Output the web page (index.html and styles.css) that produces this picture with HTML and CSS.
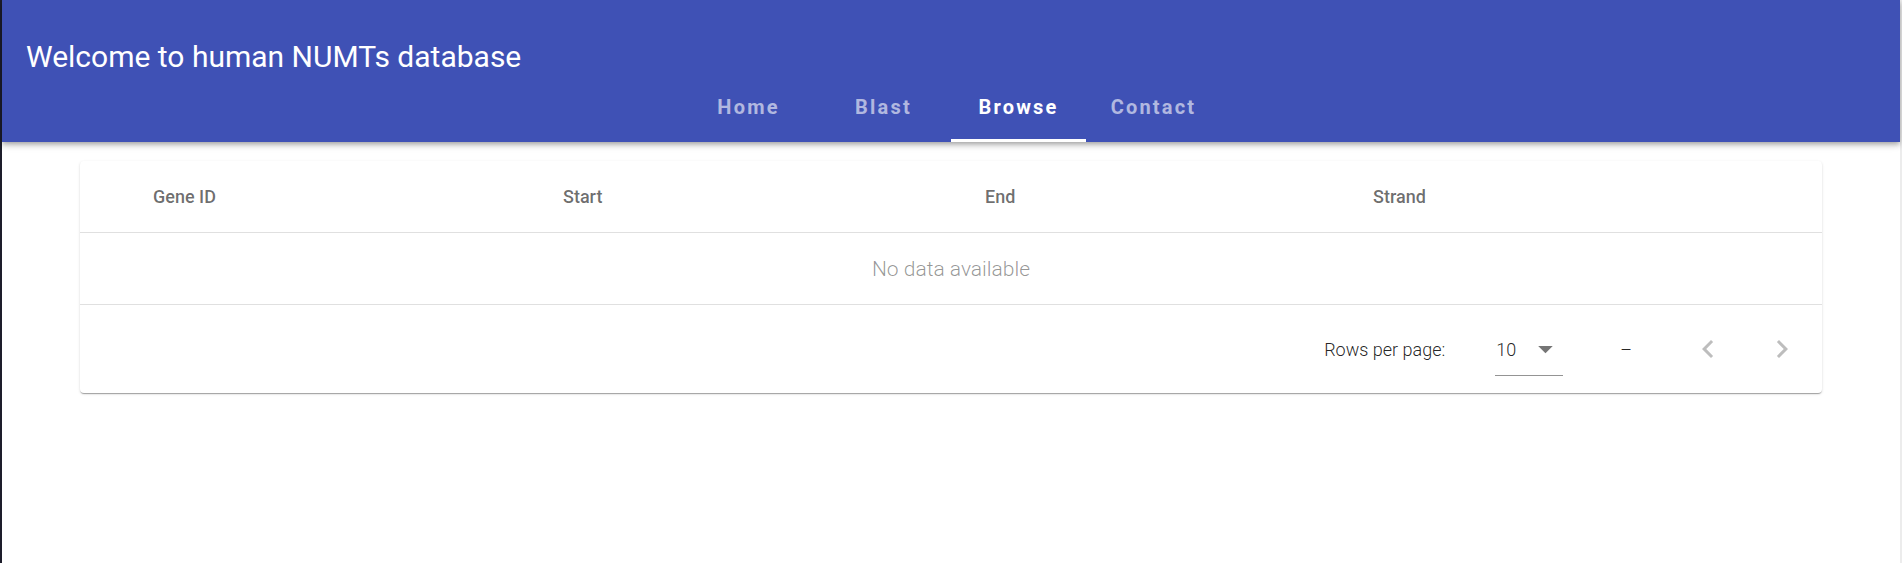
FILE: index.html
```html
<!DOCTYPE html>
<html lang="en">
<head>
<meta charset="utf-8">
<title>Human NUMTs database</title>
<link rel="stylesheet" href="styles.css">
</head>
<body>
<div class="edge-left"></div>
<div class="app">
  <header class="toolbar">
    <div class="title">Welcome to human NUMTs database</div>
    <nav class="tabs">
      <a class="tab">Home</a>
      <a class="tab">Blast</a>
      <a class="tab active">Browse</a>
      <a class="tab">Contact</a>
    </nav>
  </header>
  <main class="content">
    <section class="card">
      <div class="thead">
        <div class="th">Gene ID</div>
        <div class="th">Start</div>
        <div class="th">End</div>
        <div class="th">Strand</div>
      </div>
      <div class="empty-row">No data available</div>
      <div class="footer">
        <span class="rows-label">Rows per page:</span>
        <div class="select">
          <span class="select-value">10</span>
          <svg class="select-arrow" viewBox="0 0 24 24" width="36" height="36"><path d="M7 10l5 5 5-5z"/></svg>
        </div>
        <span class="range">–</span>
        <button class="page-btn prev" aria-label="Previous page">
          <svg viewBox="0 0 24 24" width="36" height="36"><path d="M15.41 7.41L14 6l-6 6 6 6 1.41-1.41L10.83 12z"/></svg>
        </button>
        <button class="page-btn next" aria-label="Next page">
          <svg viewBox="0 0 24 24" width="36" height="36"><path d="M10 6L8.59 7.41 13.17 12l-4.58 4.59L10 18l6-6z"/></svg>
        </button>
      </div>
    </section>
  </main>
</div>
<div class="edge-right"></div>
</body>
</html>
```
FILE: styles.css
```css
html, body {
  margin: 0;
  height: 100%;
}
body {
  display: flex;
  overflow: hidden;
  background: #ffffff;
  font-family: Roboto, "Liberation Sans", Arial, sans-serif;
}
.edge-left {
  width: 2px;
  flex: none;
  background: #1d1d2b;
}
.edge-right {
  width: 2px;
  flex: none;
  background: #ececec;
}
.app {
  flex: 1;
  display: flex;
  flex-direction: column;
  min-width: 0;
}
.toolbar {
  position: relative;
  z-index: 1;
  height: 142px;
  box-sizing: border-box;
  background: #3f51b5;
  display: flex;
  flex-direction: column;
  box-shadow: 0 2px 4px -1px rgba(0,0,0,.2), 0 4px 5px 0 rgba(0,0,0,.14), 0 1px 10px 0 rgba(0,0,0,.12);
}
.title {
  padding: 39px 0 0 24px;
  font-size: 30px;
  line-height: 36px;
  color: #ffffff;
  font-weight: 400;
}
.tabs {
  flex: 1;
  display: flex;
  justify-content: center;
}
.tab {
  position: relative;
  width: 135px;
  display: flex;
  align-items: center;
  justify-content: center;
  padding-bottom: 3px;
  font-size: 20px;
  font-weight: 700;
  letter-spacing: 2.2px;
  color: rgba(255,255,255,.6);
  cursor: pointer;
}
.tab.active {
  color: #ffffff;
}
.tab.active::after {
  content: "";
  position: absolute;
  left: 0;
  right: 0;
  bottom: 0;
  height: 3px;
  background: #ffffff;
}
.content {
  padding: 19px 78px;
}
.card {
  background: #fff;
  border-radius: 4px;
  box-shadow: 0 2px 1px -1px rgba(0,0,0,.2), 0 1px 1px 0 rgba(0,0,0,.14), 0 1px 3px 0 rgba(0,0,0,.12);
}
.thead {
  display: grid;
  grid-template-columns: 410px 422px 388px 1fr;
  padding-left: 73px;
  height: 71px;
  align-items: center;
  border-bottom: 1px solid rgba(0,0,0,.12);
}
.th {
  font-size: 18px;
  font-weight: 500;
  color: rgba(0,0,0,.58);
}
.empty-row {
  height: 71px;
  display: flex;
  align-items: center;
  justify-content: center;
  border-bottom: 1px solid rgba(0,0,0,.12);
  font-size: 21px;
  font-weight: 300;
  color: rgba(0,0,0,.42);
}
.footer {
  height: 88px;
  display: flex;
  align-items: center;
  justify-content: flex-end;
  padding-right: 22px;
  font-size: 18px;
  font-weight: 300;
  color: rgba(0,0,0,.87);
}
.rows-label {
  margin-right: 50px;
}
.select {
  position: relative;
  width: 68px;
  height: 36px;
  display: flex;
  align-items: center;
}
.select::after {
  content: "";
  position: absolute;
  left: 0;
  right: 0;
  bottom: -9px;
  height: 1px;
  background: rgba(0,0,0,.42);
}
.select-value {
  width: 33px;
  padding-left: 1px;
}
.select-arrow {
  fill: rgba(0,0,0,.54);
}
.range {
  margin-left: 57px;
  margin-right: 58px;
  color: rgba(0,0,0,.87);
}
.page-btn {
  width: 36px;
  height: 36px;
  padding: 0;
  border: 0;
  background: none;
  display: flex;
  align-items: center;
  justify-content: center;
}
.page-btn svg {
  fill: rgba(0,0,0,.26);
}
.page-btn.next {
  margin-left: 38px;
}
```
